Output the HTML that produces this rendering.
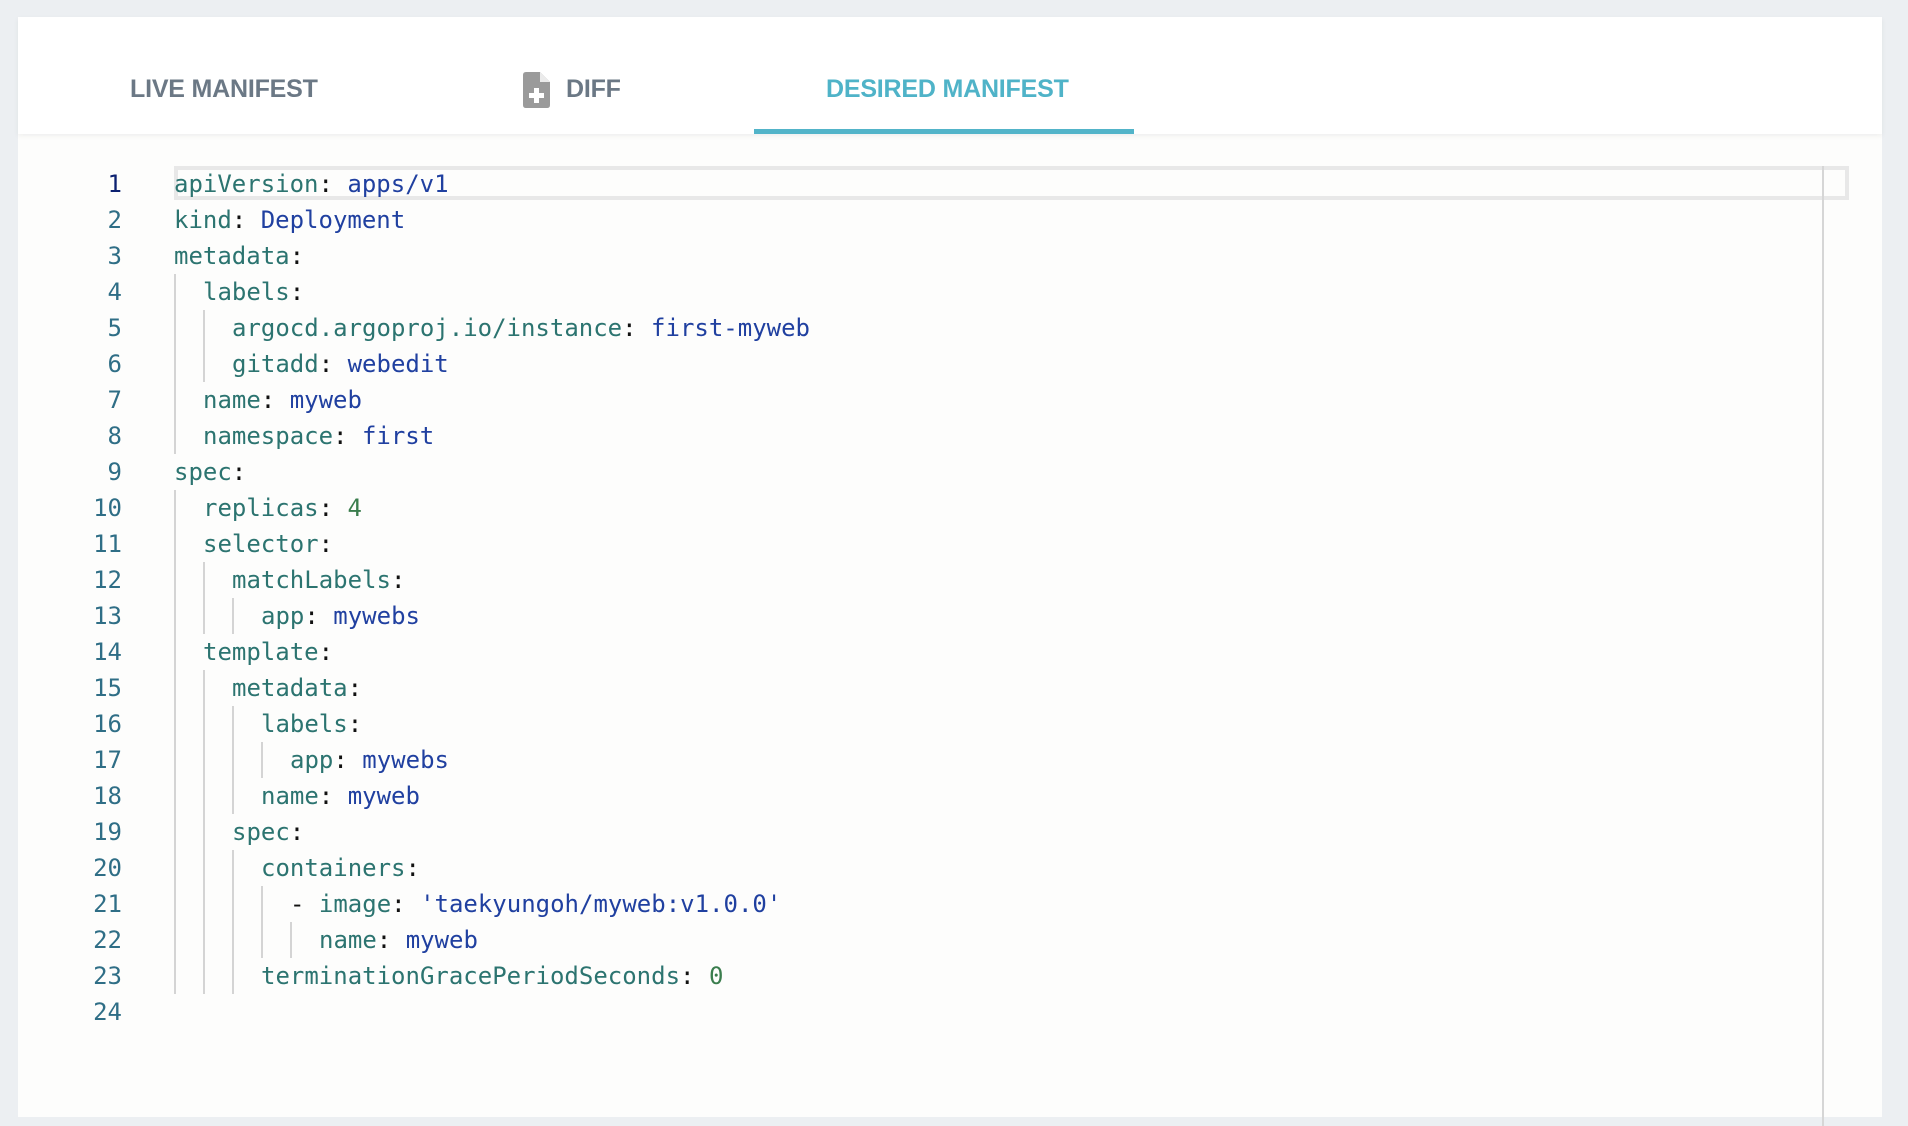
<!DOCTYPE html>
<html><head><meta charset="utf-8"><style>
html,body{margin:0;padding:0;width:1908px;height:1068px;background:#eceff2;overflow:hidden}
.card{position:absolute;left:18px;top:17px;width:1864px;height:1100px;background:#fdfdfc}
.hdr{position:absolute;left:0;top:0;width:1864px;height:117px;background:#fff;box-shadow:0 2px 5px rgba(0,0,0,0.06)}
.tab{position:absolute;top:58px;font-family:"Liberation Sans",sans-serif;font-size:25px;font-weight:bold;color:#6b7885;letter-spacing:-0.2px}
.ul{position:absolute;left:736px;top:112px;width:380px;height:5px;background:#52b4c9}
.code{position:absolute;left:-1px;top:0;font-family:"DejaVu Sans Mono",monospace;font-size:24px}
.ln{position:absolute;width:105px;text-align:right;color:#2f6e86;height:36px;line-height:36px}
.l{position:absolute;left:157px;height:36px;line-height:36px;white-space:pre;color:#111}
.g{display:inline-block;width:29px;height:36px;vertical-align:top;box-sizing:border-box;border-left:2px solid #d4d4d4}
.k{color:#2c7470}.v{color:#2040a0}.n{color:#3a7d4d}
</style></head><body>
<div class="card">
<div class="hdr">
 <div class="tab" style="left:112px">LIVE MANIFEST</div>
 <svg style="position:absolute;left:505px;top:55px" width="28" height="36" viewBox="0 0 28 36"><path d="M3 0H17L27 10V33Q27 36 24 36H3Q0 36 0 33V3Q0 0 3 0Z" fill="#9a9a9a"/><path d="M17 0V10H27Z" fill="#fff" opacity=".8"/><path d="M11 16h5v5h5v5h-5v5h-5v-5H6v-5h5z" fill="#fff"/></svg>
 <div class="tab" style="left:548px">DIFF</div>
 <div class="tab" style="left:808px;color:#4fb3c8">DESIRED MANIFEST</div>
 <div class="ul"></div>
</div>
<div style="position:absolute;left:156px;top:149px;width:1675px;height:34px;border:4px solid #e8e8e8;box-sizing:border-box"></div>
<div style="position:absolute;left:1804px;top:149px;width:2px;height:960px;background:#d6d6d6"></div>
<div class="code" id="c"></div>
</div>
<script>
var L=[
[0,'<span class="k">apiVersion</span>: <span class="v">apps/v1</span>'],
[0,'<span class="k">kind</span>: <span class="v">Deployment</span>'],
[0,'<span class="k">metadata</span>:'],
[1,'<span class="k">labels</span>:'],
[2,'<span class="k">argocd.argoproj.io/instance</span>: <span class="v">first-myweb</span>'],
[2,'<span class="k">gitadd</span>: <span class="v">webedit</span>'],
[1,'<span class="k">name</span>: <span class="v">myweb</span>'],
[1,'<span class="k">namespace</span>: <span class="v">first</span>'],
[0,'<span class="k">spec</span>:'],
[1,'<span class="k">replicas</span>: <span class="n">4</span>'],
[1,'<span class="k">selector</span>:'],
[2,'<span class="k">matchLabels</span>:'],
[3,'<span class="k">app</span>: <span class="v">mywebs</span>'],
[1,'<span class="k">template</span>:'],
[2,'<span class="k">metadata</span>:'],
[3,'<span class="k">labels</span>:'],
[4,'<span class="k">app</span>: <span class="v">mywebs</span>'],
[3,'<span class="k">name</span>: <span class="v">myweb</span>'],
[2,'<span class="k">spec</span>:'],
[3,'<span class="k">containers</span>:'],
[4,'- <span class="k">image</span>: <span class="v">\'taekyungoh/myweb:v1.0.0\'</span>'],
[5,'<span class="k">name</span>: <span class="v">myweb</span>'],
[3,'<span class="k">terminationGracePeriodSeconds</span>: <span class="n">0</span>'],
[0,'']];
var h='';
for(var i=0;i<L.length;i++){var t=149+i*36;
h+='<div class="ln" style="top:'+t+'px;'+(i==0?'color:#0c2170':'')+'">'+(i+1)+'</div>';
var g='';for(var j=0;j<L[i][0];j++)g+='<span class="g"></span>';
h+='<div class="l" style="top:'+t+'px">'+g+L[i][1]+'</div>';}
document.getElementById('c').innerHTML=h;
</script>
</body></html>
